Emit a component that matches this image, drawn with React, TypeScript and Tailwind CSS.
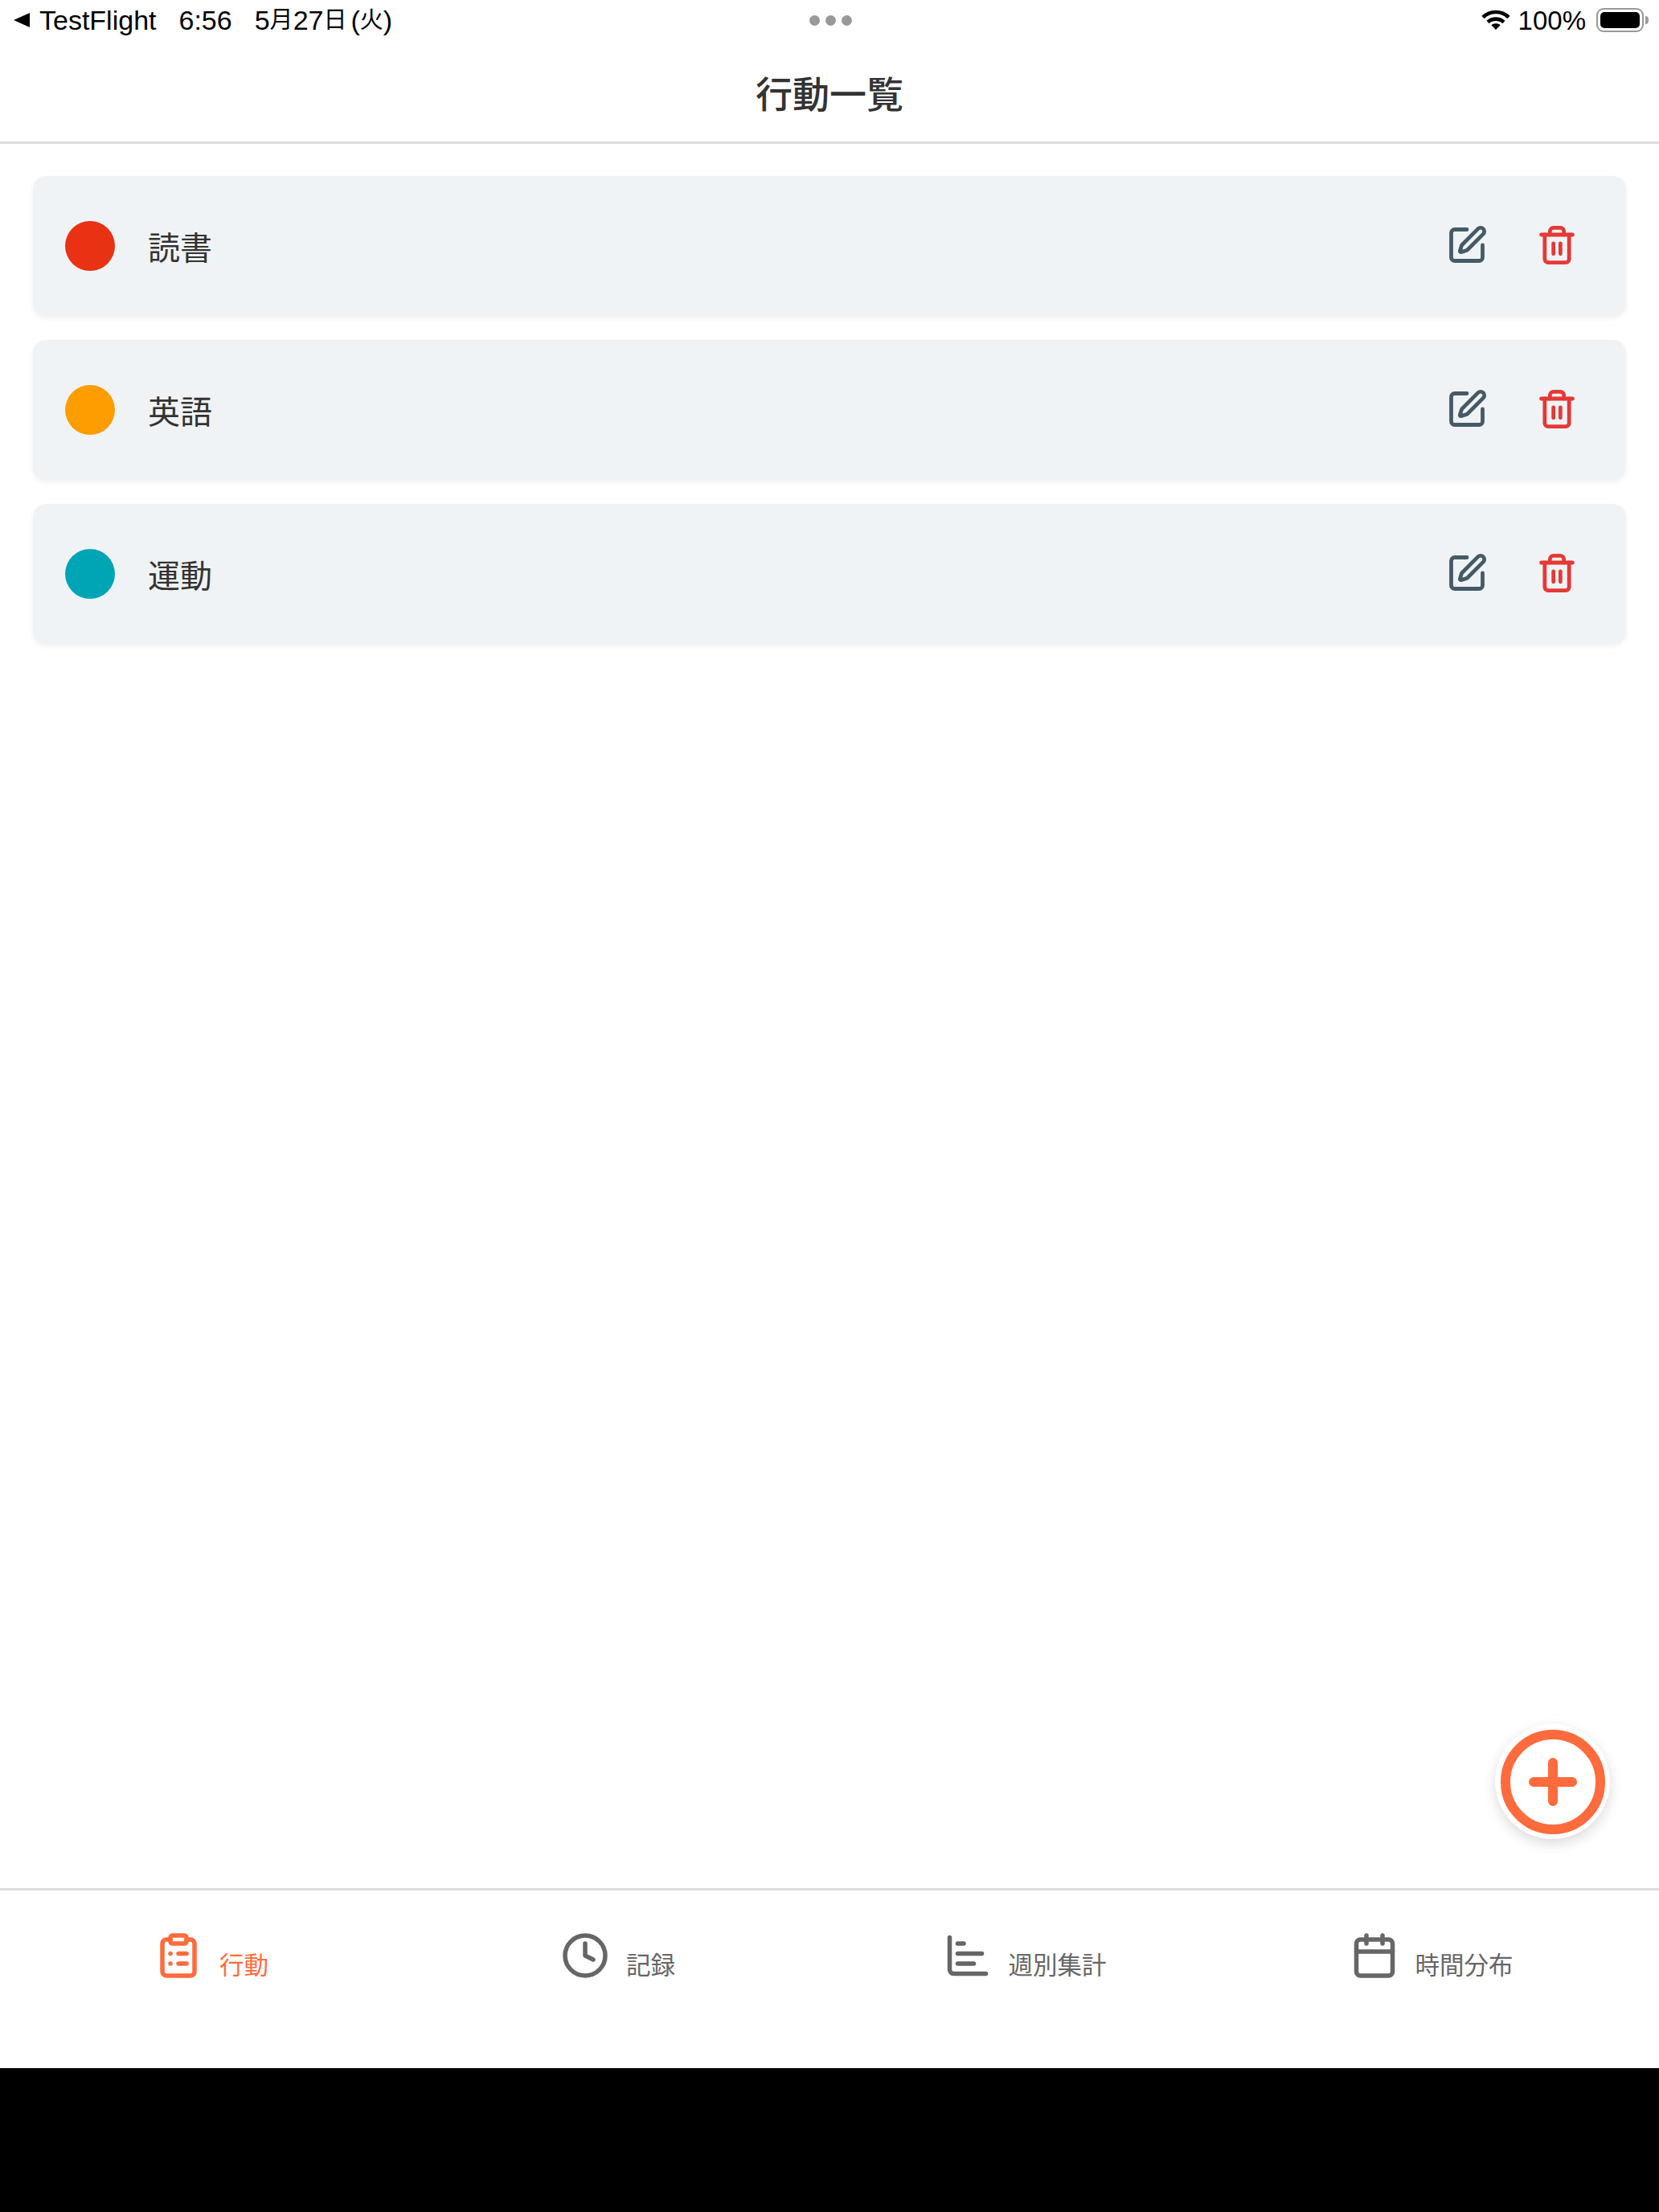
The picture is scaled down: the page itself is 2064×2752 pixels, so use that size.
import { ChartBar, Calendar, ClipboardList, Clock, SquarePen, Trash2 } from 'lucide-react'
import type { LucideIcon } from 'lucide-react'

type Tab = { label: string; icon: LucideIcon; active?: boolean }

const actions = [
  { name: '読書', dot: 'bg-[#e93113]' },
  { name: '英語', dot: 'bg-[#fe9d00]' },
  { name: '運動', dot: 'bg-[#00a5b5]' },
]

const tabs: Tab[] = [
  { label: '行動', icon: ClipboardList, active: true },
  { label: '記録', icon: Clock },
  { label: '週別集計', icon: ChartBar },
  { label: '時間分布', icon: Calendar },
]

export default function App() {
  return (
    <div className="flex flex-col h-[2752px] bg-white font-['Noto_Sans_CJK_JP',sans-serif] overflow-hidden">
      <StatusBar />

      {/* Header */}
      <header className="h-[126px] flex items-center justify-center border-b-[3px] border-[#dedede] box-content">
        <h1 className="text-[46px] font-medium text-[#333] leading-none mt-[2px]">行動一覧</h1>
      </header>

      {/* Action list */}
      <main className="relative flex-1 min-h-0 flex flex-col gap-[30px] pt-[40px] px-[41px]">
        {actions.map(a => (
          <div
            key={a.name}
            className="h-[174px] flex items-center rounded-[16px] bg-[#f0f3f6] pl-[40px] shadow-[0_3px_6px_rgba(0,0,0,0.06)]"
          >
            <span className={`w-[62px] h-[62px] rounded-full ${a.dot}`} />
            <span className="ml-[41px] text-[40px] leading-none text-[#333] mt-[-1px]">{a.name}</span>
            <div className="ml-auto flex items-center gap-[60px] pr-[60px] mt-[-2px]">
              <SquarePen className="w-[52px] h-[52px] text-[#455a64]" strokeWidth={2.2} />
              <Trash2 className="w-[52px] h-[52px] text-[#e53935]" strokeWidth={2.2} />
            </div>
          </div>
        ))}

        {/* Add button */}
        <button className="absolute right-[61px] bottom-[61px] w-[143px] h-[143px] rounded-full bg-white flex items-center justify-center shadow-[0_6px_16px_rgba(0,0,0,0.14)]">
          <svg viewBox="0 0 130 130" className="w-[130px] h-[130px]" fill="none" stroke="#ff6b3d" strokeLinecap="round">
            <circle cx="65" cy="65" r="59" strokeWidth="12" />
            <path d="M65 41v48M41 65h48" strokeWidth="12" />
          </svg>
        </button>
      </main>

      {/* Tab bar */}
      <nav className="h-[224px] flex border-t-[3px] border-[#dedede] px-[20px] pt-[51px]">
        {tabs.map(t => (
          <TabItem key={t.label} tab={t} />
        ))}
      </nav>

      <div className="h-[179px] bg-black" />
    </div>
  )
}

function TabItem({ tab }: { tab: Tab }) {
  const Icon = tab.icon
  return (
    <div className={`flex-1 flex items-start justify-center pr-[20px] ${tab.active ? 'text-[#ff6b3d]' : 'text-[#666]'}`}>
      <Icon className="w-[60px] h-[60px]" strokeWidth={2.2} />
      <span className="ml-[21px] mt-[20px] text-[30.5px] leading-[40px]">{tab.label}</span>
    </div>
  )
}

function StatusBar() {
  return (
    <div className="h-[50px] flex items-center text-black font-['Liberation_Sans','Noto_Sans_CJK_JP',sans-serif] text-[33px] leading-none">
      <div className="flex-1 flex items-center pl-[17px] text-[34px]">
        <svg viewBox="0 0 20 18" className="w-[20px] h-[18px]" fill="currentColor">
          <path d="M20 0v18L0 9z" />
        </svg>
        <span className="ml-[12px]">TestFlight</span>
        <span className="ml-[28px]">6:56</span>
        <span className="ml-[28px] flex items-center">
          5<span className="text-[29px]">月</span>27<span className="text-[29px]">日</span>
          <span className="ml-[5px]">(</span><span className="text-[29px]">火</span>)
        </span>
      </div>

      <div className="flex items-center gap-[7px] mr-[2px]">
        <span className="w-[13px] h-[13px] rounded-full bg-[#999]" />
        <span className="w-[13px] h-[13px] rounded-full bg-[#999]" />
        <span className="w-[13px] h-[13px] rounded-full bg-[#999]" />
      </div>

      <div className="flex-1 flex items-center justify-end pr-[13px]">
        <svg viewBox="0 0 36 26" className="w-[36px] h-[26px] mr-[-1px]" fill="none" stroke="currentColor" strokeWidth="4.6">
          <path d="M2 9.5c9-8.6 23-8.6 32 0" />
          <path d="M8 15.5c5.8-5.2 14.2-5.2 20 0" />
          <path d="M18 25l-5.6-5.8c3.2-2.6 8-2.6 11.2 0z" fill="currentColor" stroke="none" />
        </svg>
        <span className="ml-[11px]">100%</span>
        <div className="ml-[13px] flex items-center">
          <div className="w-[59px] h-[30px] rounded-[9px] border-[2px] border-[#999] p-[3px]">
            <div className="w-full h-full rounded-[5px] bg-black" />
          </div>
          <span className="ml-[2px] w-[4px] h-[10px] rounded-r-full bg-[#999]" />
        </div>
      </div>
    </div>
  )
}
